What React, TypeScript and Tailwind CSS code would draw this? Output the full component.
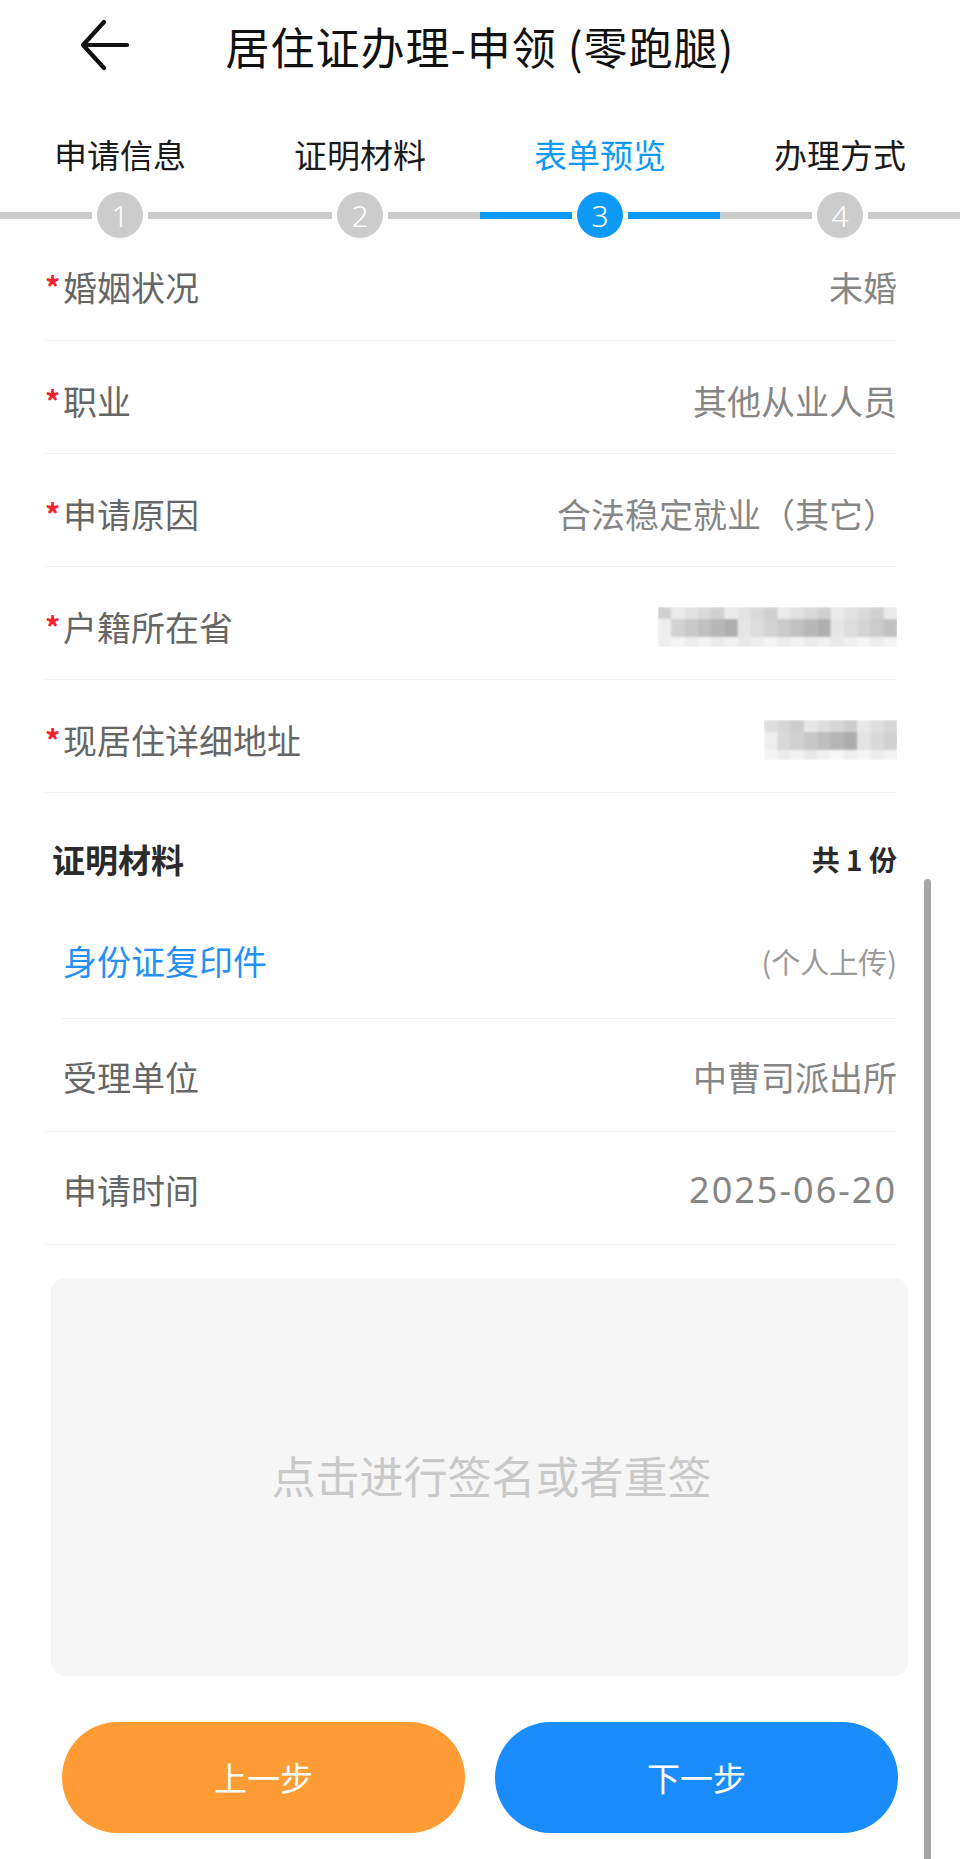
import React from 'react';

const font = { fontFamily: '"Noto Sans CJK SC", "Noto Sans", sans-serif' };

const steps = [
  { n: 1, label: '申请信息' },
  { n: 2, label: '证明材料' },
  { n: 3, label: '表单预览' },
  { n: 4, label: '办理方式' },
];
const active = 3;

const rows = [
  { label: '婚姻状况', value: '未婚' },
  { label: '职业', value: '其他从业人员' },
  { label: '申请原因', value: '合法稳定就业（其它）' },
  { label: '户籍所在省', blur: 18 },
  { label: '现居住详细地址', blur: 10 },
];

// pixelated (mosaic) value placeholder
function Mosaic({ cols, seed }: { cols: number; seed: number }) {
  const cell = 13.3;
  const bands = [
    { y: 0, h: 12, base: 204, range: 36 },
    { y: 12, h: 18, base: 168, range: 64 },
    { y: 30, h: 10, base: 232, range: 16 },
  ];
  const rects: React.ReactNode[] = [];
  bands.forEach((b, bi) => {
    for (let i = 0; i < cols; i++) {
      const h = ((i + 5) * 7919 + (bi + 2) * 104729 + seed * 131) % 991;
      let v = b.base + (h % b.range);
      if (bi === 1 && i === 0) v = 238;
      const c = `rgb(${v},${v},${v})`;
      rects.push(<rect key={bi + '-' + i} x={i * cell} y={b.y} width={cell + 0.5} height={b.h} fill={c} />);
    }
  });
  return (
    <svg width={Math.round(cols * cell)} height={40} viewBox={`0 0 ${cols * cell} 40`}>
      <defs>
        <filter id={'mb' + seed}>
          <feGaussianBlur stdDeviation="0.8" />
        </filter>
      </defs>
      <g filter={`url(#mb${seed})`}>{rects}</g>
    </svg>
  );
}

function Row({
  label,
  value,
  blur,
  first,
  required = true,
}: {
  label: string;
  value?: string;
  blur?: number;
  first?: boolean;
  required?: boolean;
}) {
  return (
    <div
      className={`flex items-center justify-between border-b border-[#f0f0f0] ${
        first ? 'pt-[24px] pb-[33px]' : 'pt-[40px] pb-[32px]'
      }`}
    >
      <div className="flex items-center h-[40px]">
        <span className="w-[18px] text-[30px] leading-none font-bold text-[#f5222d] -translate-y-[1px]">
          {required ? '*' : ''}
        </span>
        <span className="text-[34px] leading-[40px] text-[#666666]">{label}</span>
      </div>
      {blur ? (
        <Mosaic cols={blur} seed={blur} />
      ) : (
        <span className="text-[34px] leading-[40px] text-[#868686]">{value}</span>
      )}
    </div>
  );
}

export default function App() {
  return (
    <div className="relative w-[960px] h-[1859px] overflow-hidden bg-white" style={font}>
      {/* Header */}
      <div className="grid grid-cols-[1fr_auto_1fr] items-center h-[88px]">
        <div className="pl-[78px] pt-[2px]">
          <svg width="52" height="54" viewBox="0 0 52 54" fill="none">
            <path
              d="M26 4 L5 27 L26 50 M5 27 H49"
              stroke="#111"
              strokeWidth="4.2"
              strokeLinecap="round"
              strokeLinejoin="round"
            />
          </svg>
        </div>
        <h1 className="text-[44px] leading-[56px] text-[#111] tracking-[1px] pt-[4px]">
          居住证办理-申领 (零跑腿)
        </h1>
        <div />
      </div>

      {/* Steps */}
      <div className="flex pt-[46px]">
        {steps.map((s) => {
          const on = s.n === active;
          return (
            <div key={s.n} className="w-1/4 flex flex-col items-center">
              <span
                className={`text-[33px] leading-[40px] ${on ? 'text-[#0d9af5]' : 'text-[#1a1a1a]'}`}
              >
                {s.label}
              </span>
              <div className="w-full flex items-center mt-[13px] h-[56px]">
                <div className={`flex-1 h-[7px] ${on ? 'bg-[#0d9af5]' : 'bg-[#cccccc]'}`} />
                <div
                  className={`w-[46px] h-[46px] mx-[5px] rounded-full flex items-center justify-center text-white text-[30px] font-light ${
                    on ? 'bg-[#0d9af5]' : 'bg-[#cccccc]'
                  }`}
                  style={{ fontFamily: '"Noto Sans", "Open Sans", sans-serif' }}
                >
                  {s.n}
                </div>
                <div className={`flex-1 h-[7px] ${on ? 'bg-[#0d9af5]' : 'bg-[#cccccc]'}`} />
              </div>
            </div>
          );
        })}
      </div>

      {/* Form rows */}
      <div className="ml-[45px] w-[852px]">
        {rows.map((r, i) => (
          <Row key={r.label} label={r.label} value={r.value} blur={r.blur} first={i === 0} />
        ))}

        {/* 证明材料 */}
        <div className="flex items-center justify-between pt-[46px] pl-[7px]">
          <span className="text-[33px] leading-[40px] font-bold text-[#2b2b2b]">证明材料</span>
          <span className="text-[28px] leading-[40px] font-bold text-[#2b2b2b]">共 1 份</span>
        </div>
        <div className="ml-[17px] flex items-center justify-between border-b border-[#f0f0f0] pt-[62px] pb-[37px]">
          <span className="pl-[1px] text-[34px] leading-[40px] text-[#2590f5]">身份证复印件</span>
          <span className="text-[29px] leading-[40px] text-[#9a9a9a]">(个人上传)</span>
        </div>

        <div className="flex items-center justify-between border-b border-[#f0f0f0] pt-[38px] pb-[34px]">
          <span className="pl-[18px] text-[34px] leading-[40px] text-[#666666]">受理单位</span>
          <span className="text-[34px] leading-[40px] text-[#868686]">中曹司派出所</span>
        </div>
        <div className="flex items-center justify-between border-b border-[#f0f0f0] pt-[38px] pb-[34px]">
          <span className="pl-[18px] text-[34px] leading-[40px] text-[#666666]">申请时间</span>
          <span
            className="text-[36px] leading-[40px] tracking-[2px] text-[#868686]"
            style={{ fontFamily: '"Noto Sans", "Open Sans", sans-serif' }}
          >
            2025-06-20
          </span>
        </div>
      </div>

      {/* Signature pad */}
      <div className="ml-[51px] w-[857px] h-[398px] mt-[33px] rounded-[14px] bg-[#f6f6f6] flex items-center justify-center">
        <span className="text-[44px] text-[#c9c9c9] translate-x-[12px] -translate-y-[2px]">点击进行签名或者重签</span>
      </div>

      {/* Buttons */}
      <div className="flex gap-[30px] ml-[62px] mt-[46px]">
        <button className="w-[403px] h-[111px] rounded-full bg-[#ff9c36] text-white text-[33px]">
          上一步
        </button>
        <button className="w-[403px] h-[111px] rounded-full bg-[#1b8cfb] text-white text-[33px]">
          下一步
        </button>
      </div>

      {/* Scroll indicator */}
      <div className="absolute left-[924px] top-[879px] w-[7px] h-[1000px] rounded-full bg-[#a6a6a6]" />
    </div>
  );
}
